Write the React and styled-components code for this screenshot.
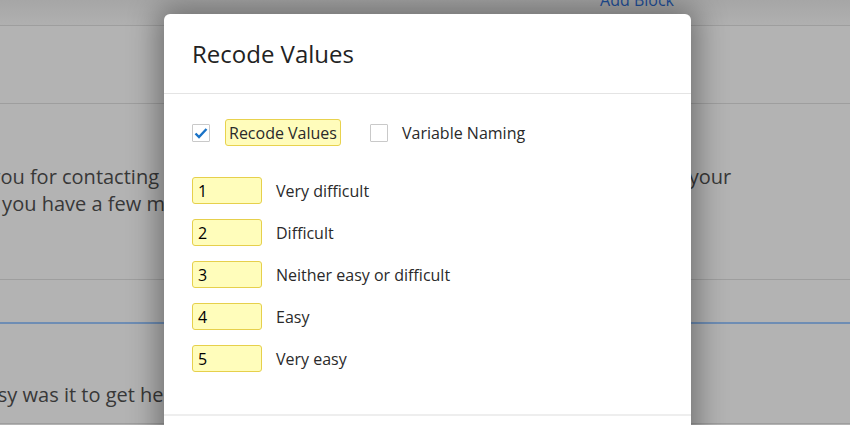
import React from "react"
import styled, { createGlobalStyle } from "styled-components"

const GlobalStyle = createGlobalStyle`
  html, body {
    margin: 0;
    padding: 0;
    width: 850px;
    height: 425px;
    overflow: hidden;
    font-family: "Open Sans", "Liberation Sans", sans-serif;
  }
`

// survey page behind the overlay
const Page = styled.div`
  position: relative;
  width: 850px;
  height: 425px;
  overflow: hidden;
  background: #b3b3b3;
`

const Column = styled.div`
  width: 994px;
  margin: 0 0 0 -72px;
`

const TopBar = styled.div`
  height: 25px;
  display: flex;
  justify-content: flex-end;
  align-items: flex-end;
  padding-right: 248px;
  border-bottom: 1px solid #9e9e9e;
  background: linear-gradient(#a6a6a6, #b0b0b0);
`

const AddBlock = styled.span`
  color: #1f4f9a;
  font-size: 16px;
  line-height: 16px;
  margin-bottom: 17px;
`

const Section = styled.div`
  height: ${p => p.h}px;
  border-bottom: ${p => p.line || "1px solid #9e9e9e"};
  box-sizing: border-box;
  padding-top: ${p => p.pt || 0}px;
`

const QuestionText = styled.p`
  margin: 0;
  font-size: 20px;
  line-height: 27px;
  color: #383838;
  white-space: nowrap;
`

// modal
const Dialog = styled.div`
  position: absolute;
  left: 164px;
  top: 14px;
  width: 527px;
  height: 440px;
  background: #fff;
  border-radius: 6px;
  box-shadow: 0 0 30px 6px rgba(0, 0, 0, 0.38);
  display: flex;
  flex-direction: column;
`

const Header = styled.div`
  height: 80px;
  box-sizing: border-box;
  border-bottom: 1px solid #e4e4e4;
  display: flex;
  align-items: center;
  padding: 0 28px 0;
`

const Title = styled.h2`
  margin: 0;
  font-size: 24px;
  font-weight: 400;
  color: #222;
`

const Body = styled.div`
  padding: 25px 28px 42px;
  border-bottom: 2px solid #eeeeee;
`

const OptionsRow = styled.div`
  display: flex;
  align-items: center;
  height: 27px;
  margin-bottom: 31px;
`

const Check = styled.span`
  width: 18px;
  height: 18px;
  box-sizing: border-box;
  border: 1px solid #c9c9c9;
  border-radius: 1px;
  display: flex;
  align-items: center;
  justify-content: center;
  flex-shrink: 0;
`

const Option = styled.span`
  display: flex;
  align-items: center;
  gap: ${p => (p.highlight ? 15 : 14)}px;
  margin-right: 29px;
`

const Label = styled.span`
  font-size: 16px;
  color: #2a2a2a;
  ${p =>
    p.highlight &&
    `
    background: #fffcbb;
    border: 1px solid #e8d24e;
    border-radius: 3px;
    padding: 0 3px;
    height: 27px;
    box-sizing: border-box;
    display: flex;
    align-items: center;
  `}
`

const ValueList = styled.div`
  display: flex;
  flex-direction: column;
  gap: 15px;
`

const ValueRow = styled.div`
  display: flex;
  align-items: center;
  gap: 14px;
`

const ValueInput = styled.div`
  width: 70px;
  height: 27px;
  box-sizing: border-box;
  background: #fffdbb;
  border: 1px solid #e6d04c;
  border-radius: 3px;
  padding: 0 5px;
  font-size: 16px;
  color: #000;
  display: flex;
  align-items: center;
`

const ValueLabel = styled.span`
  font-size: 16px;
  color: #2a2a2a;
`

const values = [
  [1, "Very difficult"],
  [2, "Difficult"],
  [3, "Neither easy or difficult"],
  [4, "Easy"],
  [5, "Very easy"],
]

export default function App() {
  return (
    <>
      <GlobalStyle />
      <Page>
        <Column>
          <TopBar>
            <AddBlock>Add Block</AddBlock>
          </TopBar>
          <Section h={78} />
          <Section h={176} pt={59}>
            <QuestionText>
              Thank you for contacting our customer support team. We would also love to hear your
              <br />
              Then, if you have a few minutes, please take our short survey.
            </QuestionText>
          </Section>
          <Section h={44} line="2px solid #6e8db4" />
          <Section h={100} pt={57}>
            <QuestionText>How easy was it to get help today?</QuestionText>
          </Section>
        </Column>

        <Dialog>
          <Header>
            <Title>Recode Values</Title>
          </Header>
          <Body>
            <OptionsRow>
              <Option highlight>
                <Check>
                  <svg width="14" height="12" viewBox="0 0 14 12">
                    <path d="M1.5 6.5 L5 10 L12.5 2" fill="none" stroke="#1a73c7" strokeWidth="2.4" />
                  </svg>
                </Check>
                <Label highlight>Recode Values</Label>
              </Option>
              <Option>
                <Check />
                <Label>Variable Naming</Label>
              </Option>
            </OptionsRow>
            <ValueList>
              {values.map(([n, text]) => (
                <ValueRow key={n}>
                  <ValueInput>{n}</ValueInput>
                  <ValueLabel>{text}</ValueLabel>
                </ValueRow>
              ))}
            </ValueList>
          </Body>
        </Dialog>
      </Page>
    </>
  )
}
